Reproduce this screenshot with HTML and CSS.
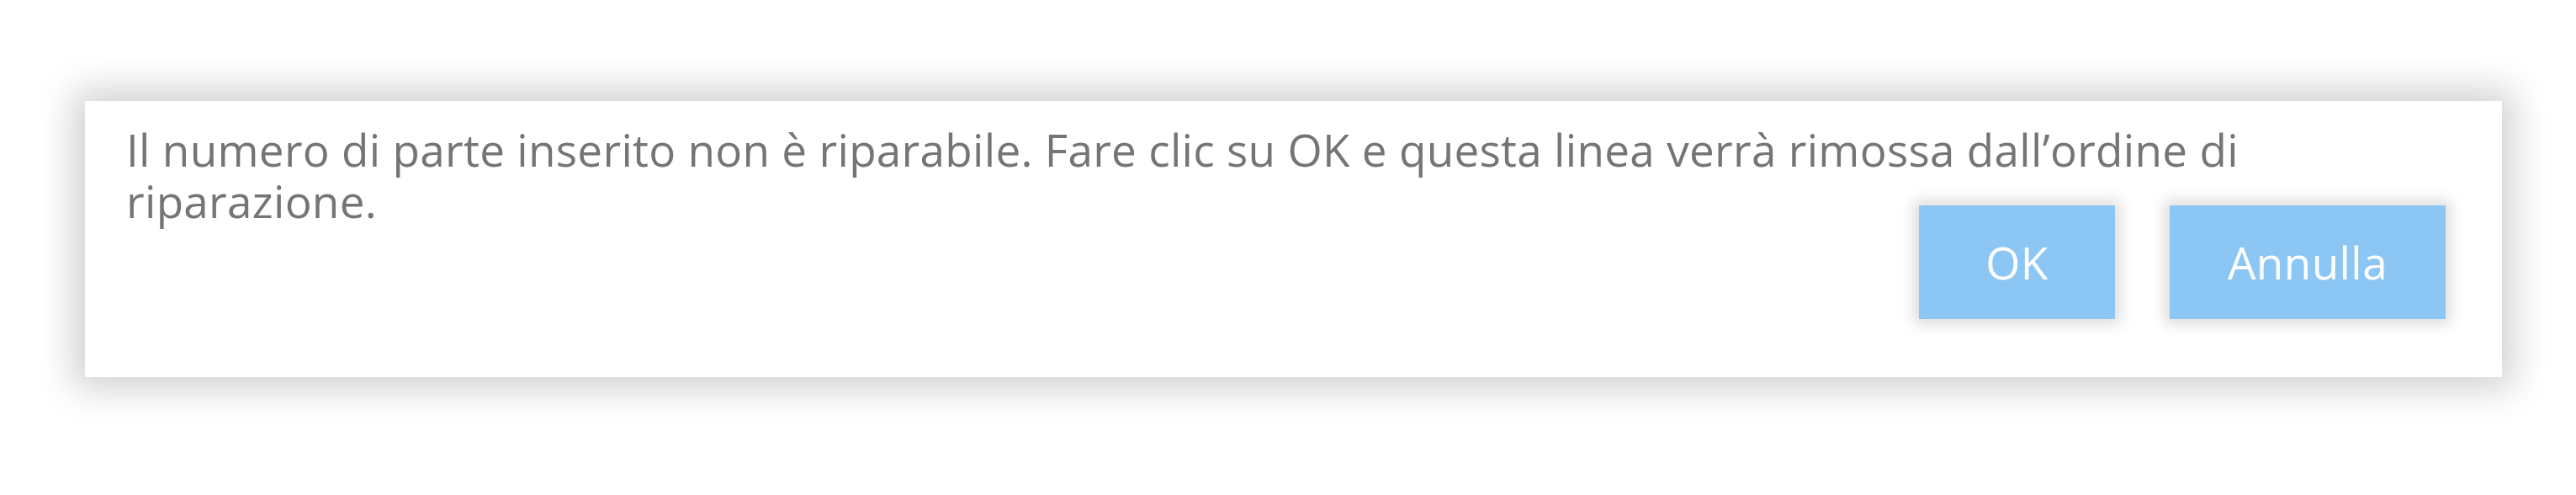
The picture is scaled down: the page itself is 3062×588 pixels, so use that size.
FILE: index.html
```html
<!DOCTYPE html>
<html lang="it">
<head>
  <meta charset="UTF-8" />
  <meta name="viewport" content="width=device-width, initial-scale=1.0"/>
  <title>Conferma</title>
  <link rel="stylesheet" href="styles.css">
</head>
<body>
  <div class="dialog">
    <p class="message">Il numero di parte inserito non è riparabile. Fare clic su OK e questa linea verrà rimossa dall’ordine di riparazione.</p>
    <div class="actions">
      <button class="btn ok">OK</button>
      <button class="btn cancel">Annulla</button>
    </div>
  </div>
</body>
</html>
```

FILE: styles.css
```css
* {
  margin: 0;
  padding: 0;
  box-sizing: border-box;
}

body {
  font-family: 'Open Sans', 'Liberation Sans', sans-serif;
  background: #fff;
  min-height: 100vh;
  padding: 120px 88px 0 101px;
}

.dialog {
  background: #fff;
  height: 328px;
  padding: 27px 67px 0 49px;
  box-shadow: 0 0 40px 14px rgba(0,0,0,0.18);
}

.message {
  max-width: 2600px;
  color: #757575;
  font-size: 53px;
  letter-spacing: 0.3px;
  line-height: 61px;
}

.actions {
  display: flex;
  justify-content: flex-end;
  gap: 65px;
  margin-top: -25px;
}

.btn {
  height: 135px;
  min-width: 233px;
  padding: 0 69px;
  border: none;
  background: #8bc6f5;
  color: #fff;
  font-family: inherit;
  font-size: 53px;
  letter-spacing: 0.4px;
  cursor: pointer;
  box-shadow: 0 0 16px 6px rgba(0,0,0,0.14);
}

.btn:hover {
  background: #7dbdf0;
}
```
